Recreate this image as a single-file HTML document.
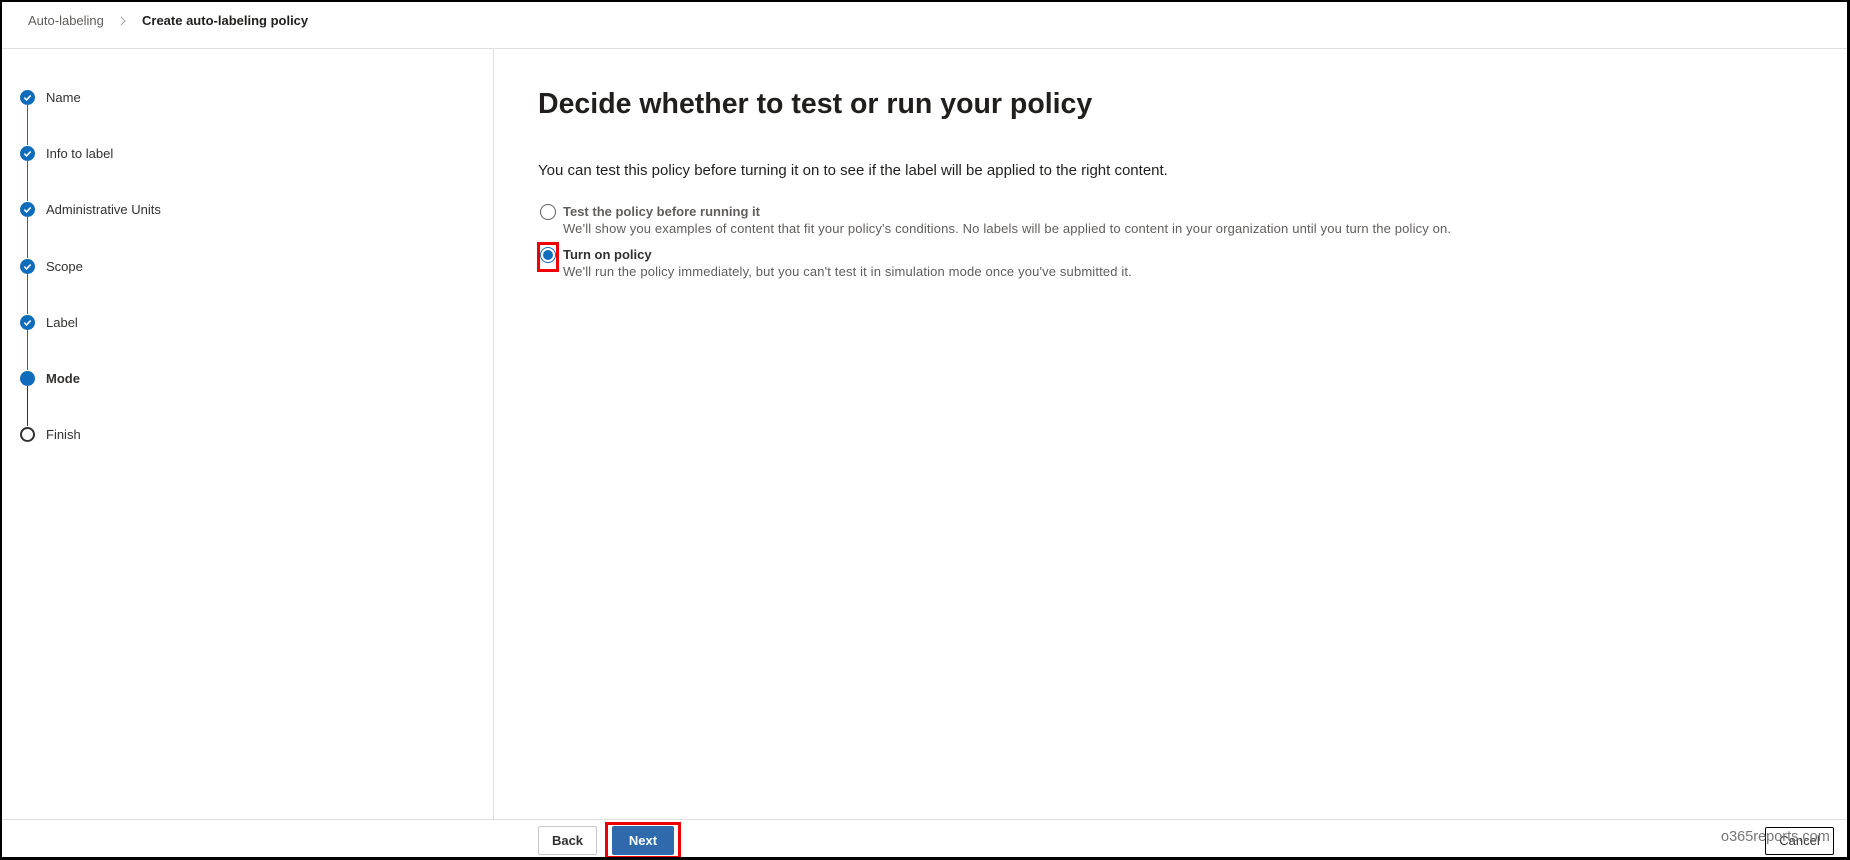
<!DOCTYPE html>
<html><head><meta charset="utf-8"><style>
*{margin:0;padding:0;box-sizing:border-box}
body{width:1850px;height:860px;background:#fff;font-family:"Segoe UI","Liberation Sans",sans-serif;color:#323130;position:relative;overflow:hidden}
.frame{position:absolute;left:0;top:0;width:1850px;height:860px;border:2px solid #000;border-right-width:3px;border-bottom-width:3px}
.a{position:absolute;white-space:nowrap}
.hline{position:absolute;left:2px;right:3px;height:1px;background:#e1dfdd}
.step{position:absolute;left:20px;width:15px;height:15px;border-radius:50%;background:#0f6cbd}
.step svg{position:absolute;left:0;top:0}
.vl{position:absolute;left:27px;width:1px;background:#0f6cbd}
.lbl{position:absolute;left:46px;font-size:13px;color:#323130;line-height:16px}
.btn{position:absolute;border-radius:2px;font-size:13px;font-weight:bold;text-align:center}
</style></head><body>
<div class="a" style="left:28px;top:13px;font-size:13px;color:#605e5c">Auto-labeling</div>
<svg style="position:absolute;left:119px;top:15px" width="8" height="12"><path d="M2 2l4 4-4 4" stroke="#a19f9d" stroke-width="1" fill="none"/></svg>
<div class="a" style="left:142px;top:13px;font-size:13px;font-weight:bold;color:#201f1e">Create auto-labeling policy</div>
<div class="hline" style="top:48px"></div>
<div style="position:absolute;left:493px;top:49px;width:1px;height:770px;background:#e1dfdd"></div>

<div class="vl" style="top:105px;height:40px"></div>
<div class="vl" style="top:161px;height:40px"></div>
<div class="vl" style="top:217px;height:41px"></div>
<div class="vl" style="top:274px;height:40px"></div>
<div class="vl" style="top:330px;height:40px"></div>
<div class="vl" style="top:386px;height:40px;background:#323130"></div>

<div class="step" style="top:90px"><svg width="15" height="15"><path d="M4.3 7.6l2.2 2.2 4.2-4.3" stroke="#fff" stroke-width="1.6" fill="none"/></svg></div>
<div class="step" style="top:146px"><svg width="15" height="15"><path d="M4.3 7.6l2.2 2.2 4.2-4.3" stroke="#fff" stroke-width="1.6" fill="none"/></svg></div>
<div class="step" style="top:202px"><svg width="15" height="15"><path d="M4.3 7.6l2.2 2.2 4.2-4.3" stroke="#fff" stroke-width="1.6" fill="none"/></svg></div>
<div class="step" style="top:259px"><svg width="15" height="15"><path d="M4.3 7.6l2.2 2.2 4.2-4.3" stroke="#fff" stroke-width="1.6" fill="none"/></svg></div>
<div class="step" style="top:315px"><svg width="15" height="15"><path d="M4.3 7.6l2.2 2.2 4.2-4.3" stroke="#fff" stroke-width="1.6" fill="none"/></svg></div>
<div class="step" style="top:371px"></div>
<div class="step" style="top:427px;background:#fff;border:2px solid #323130"></div>

<div class="lbl" style="top:90px">Name</div>
<div class="lbl" style="top:146px">Info to label</div>
<div class="lbl" style="top:202px">Administrative Units</div>
<div class="lbl" style="top:259px">Scope</div>
<div class="lbl" style="top:315px">Label</div>
<div class="lbl" style="top:371px;font-weight:bold">Mode</div>
<div class="lbl" style="top:427px">Finish</div>

<div class="a" style="left:538px;top:88px;font-size:28.5px;font-weight:bold;color:#201f1e">Decide whether to test or run your policy</div>
<div class="a" style="left:538px;top:162px;font-size:15px;color:#201f1e">You can test this policy before turning it on to see if the label will be applied to the right content.</div>

<div style="position:absolute;left:540px;top:204px;width:16px;height:16px;border-radius:50%;border:1px solid #605e5c"></div>
<div class="a" style="left:563px;top:204px;font-size:13px;font-weight:bold;color:#605e5c">Test the policy before running it</div>
<div class="a" style="left:563px;top:221px;font-size:13px;color:#605e5c;letter-spacing:0.15px">We'll show you examples of content that fit your policy's conditions. No labels will be applied to content in your organization until you turn the policy on.</div>

<div style="position:absolute;left:540px;top:247px;width:16px;height:16px;border-radius:50%;border:1px solid #0f6cbd;background:#fff"><div style="position:absolute;left:2px;top:2px;width:10px;height:10px;border-radius:50%;background:#0f6cbd"></div></div>
<div style="position:absolute;left:537px;top:242px;width:22px;height:30px;border:3px solid #e00"></div>
<div class="a" style="left:563px;top:247px;font-size:13px;font-weight:bold;color:#323130">Turn on policy</div>
<div class="a" style="left:563px;top:264px;font-size:13px;color:#605e5c;letter-spacing:0.15px">We'll run the policy immediately, but you can't test it in simulation mode once you've submitted it.</div>

<div class="hline" style="top:819px"></div>
<div class="btn" style="left:538px;top:826px;width:59px;height:29px;border:1px solid #c8c6c4;line-height:27px;color:#323130">Back</div>
<div style="position:absolute;left:605px;top:822px;width:76px;height:37px;border:3px solid #e00"></div>
<div class="btn" style="left:612px;top:826px;width:62px;height:29px;background:#2f6aad;color:#fff;line-height:29px">Next</div>
<div class="btn" style="left:1765px;top:827px;width:69px;height:28px;border:1px solid #000;line-height:26px;color:#323130;font-weight:normal">Cancel</div>
<div class="a" style="left:1721px;top:829px;font-size:14.5px;color:#777">o365reports.com</div>
<div class="frame"></div>
</body></html>
